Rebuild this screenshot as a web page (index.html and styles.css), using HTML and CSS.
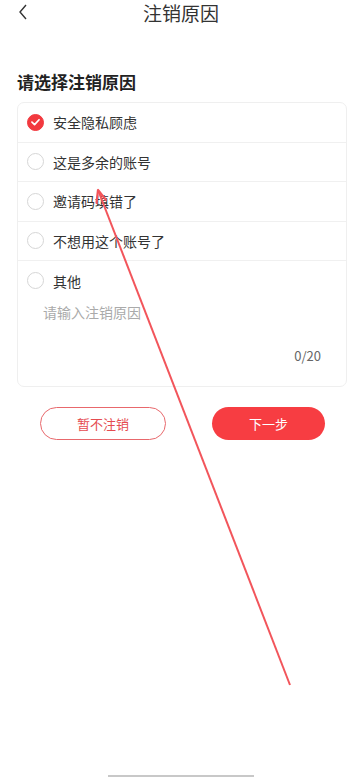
FILE: index.html
```html
<!DOCTYPE html>
<html lang="zh-CN">
<head>
  <meta charset="UTF-8">
  <meta name="viewport" content="width=device-width, initial-scale=1.0">
  <title>注销原因</title>
  <link rel="stylesheet" href="styles.css">
</head>
<body>
  <div class="page">
    <div class="nav-bar">
      <span class="back">
        <svg width="10" height="16" viewBox="0 0 10 16"><path d="M8 1 L2 8 L8 15" fill="none" stroke="#333" stroke-width="1.4"/></svg>
      </span>
      <h1>注销原因</h1>
    </div>

    <h2 class="section-title">请选择注销原因</h2>

    <div class="reason-card">
      <div class="reason-row">
        <span class="radio checked">
          <svg width="16" height="16" viewBox="0 0 16 16"><path d="M4.2 8.2 L7 10.8 L11.8 5.6" fill="none" stroke="#fff" stroke-width="1.8" stroke-linecap="round" stroke-linejoin="round"/></svg>
        </span>
        <span>安全隐私顾虑</span>
      </div>
      <div class="reason-row">
        <span class="radio"></span>
        <span>这是多余的账号</span>
      </div>
      <div class="reason-row">
        <span class="radio"></span>
        <span>邀请码填错了</span>
      </div>
      <div class="reason-row">
        <span class="radio"></span>
        <span>不想用这个账号了</span>
      </div>
      <div class="reason-row other">
        <span class="radio"></span>
        <span>其他</span>
      </div>
      <div class="other-input">
        <p class="placeholder">请输入注销原因</p>
        <p class="counter">0/20</p>
      </div>
    </div>

    <div class="actions">
      <a href="#" class="btn btn-outline">暂不注销</a>
      <a href="#" class="btn btn-primary">下一步</a>
    </div>

    <div class="home-bar"></div>
  </div>

  <!-- 标注箭头 -->
  <svg class="mark-arrow" width="362" height="778" viewBox="0 0 362 778">
    <path d="M290 685 L98 190" fill="none" stroke="#f2555b" stroke-width="2"/>
    <path d="M98 190 L96.5 203 M98 190 L106 200" fill="none" stroke="#f2555b" stroke-width="2.2" stroke-linecap="round"/>
  </svg>
</body>
</html>
```

FILE: styles.css
```css
/* Reset */
* {
  margin: 0;
  padding: 0;
  box-sizing: border-box;
}

body {
  font-family: "Noto Sans CJK SC", "Noto Sans", sans-serif;
  background-color: #fff;
  color: #333;
  width: 362px;
  height: 778px;
  overflow: hidden;
  position: relative;
}

.page {
  height: 778px;
  display: flex;
  flex-direction: column;
}

/* 顶部导航 */
.nav-bar {
  height: 26px;
  position: relative;
  display: flex;
  align-items: center;
  justify-content: center;
}

.nav-bar h1 {
  font-size: 19px;
  font-weight: normal;
  color: #333;
  line-height: 26px;
}

.back {
  position: absolute;
  left: 18px;
  top: 4px;
  display: flex;
}

/* 标题 */
.section-title {
  font-size: 17px;
  font-weight: bold;
  color: #222;
  margin: 44px 0 0 17px;
  line-height: 24px;
}

/* 原因卡片 */
.reason-card {
  margin: 8px 15px 0 17px;
  border: 1px solid #efefef;
  border-radius: 7px;
  height: 285px;
}

.reason-row {
  height: 39.5px;
  display: flex;
  align-items: center;
  padding-left: 9px;
  font-size: 14px;
  color: #333;
  border-bottom: 1px solid #f0f0f0;
}

.reason-row.other {
  border-bottom: none;
}

.radio {
  width: 17px;
  height: 17px;
  border-radius: 50%;
  border: 1px solid #d6d6d6;
  margin-right: 9px;
  display: flex;
  align-items: center;
  justify-content: center;
  flex-shrink: 0;
}

.radio.checked {
  background-color: #f2393f;
  border-color: #f2393f;
}

.other-input {
  padding: 1px 25px 0 25px;
}

.placeholder {
  font-size: 14px;
  color: #aaa;
  line-height: 20px;
}

.counter {
  text-align: right;
  font-size: 13px;
  color: #666;
  margin-top: 24px;
  line-height: 20px;
}

/* 按钮 */
.actions {
  display: flex;
  justify-content: space-between;
  padding: 0 37px 0 40px;
  margin-top: 20px;
}

.btn {
  height: 33px;
  border-radius: 17px;
  display: flex;
  align-items: center;
  justify-content: center;
  font-size: 13px;
  text-decoration: none;
}

.btn-outline {
  width: 126px;
  border: 1px solid #e8686c;
  color: #e54b50;
}

.btn-primary {
  width: 113px;
  background-color: #f73d42;
  color: #fff;
}

.home-bar {
  margin: auto auto 1px;
  width: 146px;
  height: 2px;
  background-color: #c8c8c8;
}

/* 标注 */
.mark-arrow {
  position: absolute;
  left: 0;
  top: 0;
  pointer-events: none;
}
```
